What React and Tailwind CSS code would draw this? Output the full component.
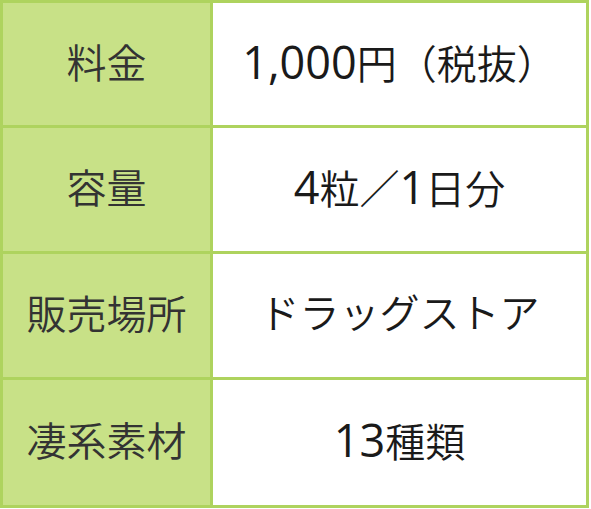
import React from 'react';

const rows = [
  { label: '料金', value: '1,000円（税抜）' },
  { label: '容量', value: '4粒／1日分' },
  { label: '販売場所', value: 'ドラッグストア' },
  { label: '凄系素材', value: '13種類' },
];

// Latin digits run a little larger, as in the original font
function Value({ text }) {
  const parts = text.split(/([0-9,]+)/).filter(Boolean);
  return parts.map((part, i) =>
    /^[0-9,]+$/.test(part) ? (
      <span key={i} className="text-[45px] font-normal">{part}</span>
    ) : (
      <span key={i}>{part}</span>
    )
  );
}

export default function App() {
  return (
    <div className="w-[591px] h-[509px] bg-white">
      <div
        className="w-[589px] grid grid-cols-[207px_373px] grid-rows-[122px_123px_123px_125px] gap-[3px] p-[3px] bg-[#aed35e] text-[40px] leading-none font-[350]"
        style={{ fontFamily: '"Open Sans", "Noto Sans CJK JP", sans-serif' }}
      >
        {rows.map((row) => (
          <React.Fragment key={row.label}>
            <div className="flex items-center justify-center pb-[3px] bg-[#c8e187] text-[#333333]">
              {row.label}
            </div>
            <div className="flex items-center justify-center pb-[6px] bg-white text-[#1a1a1a]">
              <div className="flex items-baseline">
                <Value text={row.value} />
              </div>
            </div>
          </React.Fragment>
        ))}
      </div>
    </div>
  );
}
